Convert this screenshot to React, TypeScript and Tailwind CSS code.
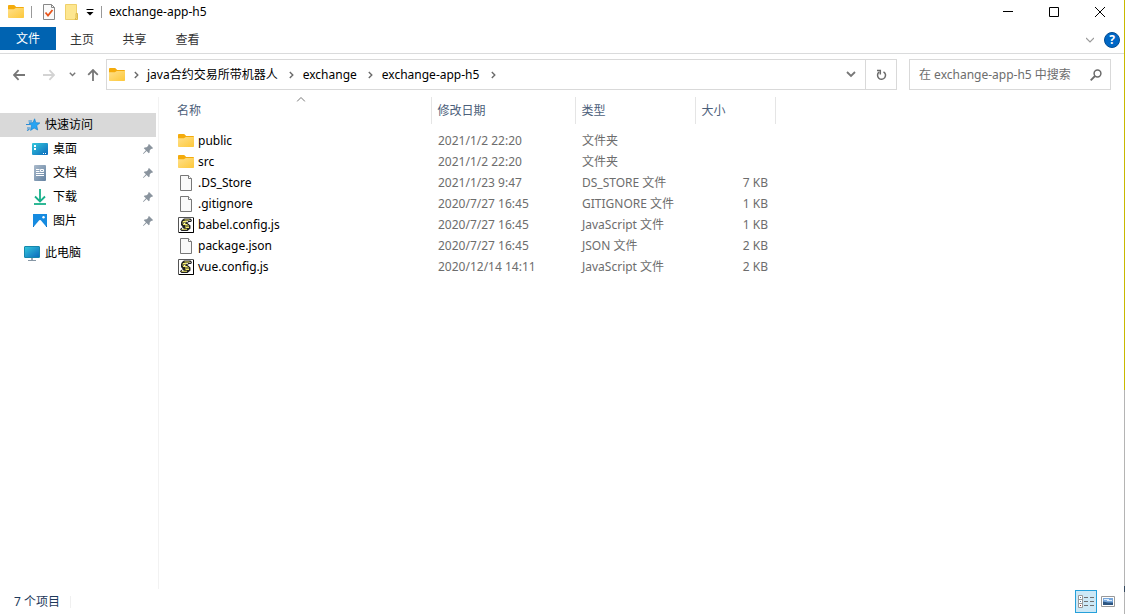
import React, { useState } from 'react';

interface FileEntry {
  name: string;
  modified: string;
  type: string;
  size: string;
  kind: 'folder' | 'file' | 'script';
}

const FILES: FileEntry[] = [
  { name: 'public', modified: '2021/1/2 22:20', type: '文件夹', size: '', kind: 'folder' },
  { name: 'src', modified: '2021/1/2 22:20', type: '文件夹', size: '', kind: 'folder' },
  { name: '.DS_Store', modified: '2021/1/23 9:47', type: 'DS_STORE 文件', size: '7 KB', kind: 'file' },
  { name: '.gitignore', modified: '2020/7/27 16:45', type: 'GITIGNORE 文件', size: '1 KB', kind: 'file' },
  { name: 'babel.config.js', modified: '2020/7/27 16:45', type: 'JavaScript 文件', size: '1 KB', kind: 'script' },
  { name: 'package.json', modified: '2020/7/27 16:45', type: 'JSON 文件', size: '2 KB', kind: 'file' },
  { name: 'vue.config.js', modified: '2020/12/14 14:11', type: 'JavaScript 文件', size: '2 KB', kind: 'script' },
];

const CRUMBS = ['java合约交易所带机器人', 'exchange', 'exchange-app-h5'];

function FolderIcon() {
  return (
    <svg width="16" height="16" viewBox="0 0 16 16" className="shrink-0">
      <defs>
        <linearGradient id="folder" x1="0" y1="0" x2="1" y2="1">
          <stop offset="0" stopColor="#ffe08a" />
          <stop offset="1" stopColor="#fdc83a" />
        </linearGradient>
      </defs>
      <path d="M0 1.9a.9.9 0 0 1 .9-.9h5.3l2 1.9h6.9a.9.9 0 0 1 .9.9V8H0z" fill="#f4ab0c" />
      <path d="M0 5.2h5.8l2-1.2H16v9.2a.8.8 0 0 1-.8.8H.8a.8.8 0 0 1-.8-.8z" fill="url(#folder)" />
    </svg>
  );
}

function PageIcon() {
  return (
    <svg width="16" height="16" viewBox="0 0 16 16" className="shrink-0">
      <path d="M2.5.5h8l3 3v12h-11z" fill="#f9f9f9" stroke="#777" />
      <path d="M10.5.5v3h3" fill="#fff" stroke="#777" />
    </svg>
  );
}

function ScriptIcon() {
  return (
    <svg width="16" height="16" viewBox="0 0 16 16" className="shrink-0">
      <path d="M.5.5h15v15H.5z" fill="#fff" stroke="#555" />
      <path d="M1 15.5h14.5V1" fill="none" stroke="#000" />
      <path d="M4 3 6 1.5h6.5L14 3l-.8 2H11l-1.5 1 3 2.5v3L9.5 14H3.5L2 12.5 3 11l2-.5L3 8V5z" fill="#222" />
      <path d="M6.5 3h5M4.8 4.5h4M4.3 6h3.6M5 7.5h4.5M7 9h4M7.5 10.5h3.5M3.5 12.3h5.5" stroke="#f7ee6a" strokeWidth="1.1" />
      <path d="M11.5 3.5h1M8.5 4.7h1.5M6 6.6h1M4 11.6h1.5" stroke="#fff" />
    </svg>
  );
}

function PinIcon() {
  return (
    <svg width="10" height="10" viewBox="0 0 10 10" className="shrink-0">
      <path d="M6 0 10 4 9 4.9 8.2 4.7 6.7 6.4 6.6 8.4 5.8 9.2 3.6 7 .7 9.7 0 9.9.2 9.2 2.9 6.3.8 4.2l.8-.8 2-.1 1.7-1.5L5.1.9z" fill="#8a949e" />
    </svg>
  );
}

function StarIcon() {
  return (
    <svg width="14" height="14" viewBox="0 0 14 14" className="shrink-0">
      <path d="m8.6.8 1.2 3.9 4.1.2-3.2 2.7 1 4.4-3.6-2-3.5 2.4.9-4.6L3 4.8l4-.1z" fill="#27a4f2" stroke="#1685d4" strokeWidth=".7" />
      <path d="M2.5 3h3.6M0 6.5h4M1 10h3.4M1 12.5l2.4-1.3" stroke="#2b8bd4" strokeWidth="1.1" />
    </svg>
  );
}

function DesktopIcon() {
  return (
    <svg width="16" height="16" viewBox="0 0 16 16" className="shrink-0">
      <defs>
        <linearGradient id="screen" x1="0" y1="0" x2="1" y2="1">
          <stop offset="0" stopColor="#35c9dc" />
          <stop offset="1" stopColor="#0b68bc" />
        </linearGradient>
      </defs>
      <rect y="2" width="16" height="12" rx="1" fill="url(#screen)" />
      <path d="M2 4h2v2H2zM2 7h2v2H2zM11 12h1v1h-1zM13 12h1v1h-1z" fill="#fff" />
    </svg>
  );
}

function DocumentIcon() {
  return (
    <svg width="16" height="16" viewBox="0 0 16 16" className="shrink-0">
      <defs>
        <linearGradient id="doc" x1="0" y1="0" x2="1" y2="1">
          <stop offset="0" stopColor="#aabacb" />
          <stop offset="1" stopColor="#6482a1" />
        </linearGradient>
      </defs>
      <rect x="2" y="0" width="12" height="16" rx="1" fill="url(#doc)" />
      <path d="M4 4.5h3.5M4 6.5h3.5M4 8.5h8M4 10.5h8" stroke="#fff" />
      <path d="M8.5 4.5h3v2h-3z" fill="#8aa0b8" stroke="#fff" />
    </svg>
  );
}

function DownloadIcon() {
  return (
    <svg width="16" height="16" viewBox="0 0 16 16" className="shrink-0" fill="none" stroke="#18b08b">
      <path d="M8 0v12.5M3 7.5l5 5 5-5" strokeWidth="1.8" />
      <path d="M2 15h12" strokeWidth="1.8" />
    </svg>
  );
}

function PictureIcon() {
  return (
    <svg width="16" height="16" viewBox="0 0 16 16" className="shrink-0">
      <path d="M1 1h14v13H1z" fill="#168be0" />
      <path d="M1.5 14 7.2 7.3q.8-.8 1.6 0L14.5 14z" fill="#fff" />
      <path d="M1 12v2h1zM15 12v2h-1z" fill="#0b60b4" />
      <circle cx="11.5" cy="4.2" r="1.2" fill="#fff" />
    </svg>
  );
}

function ComputerIcon() {
  return (
    <svg width="16" height="16" viewBox="0 0 16 16" className="shrink-0">
      <rect x=".5" y="1.5" width="15" height="11" rx=".5" fill="url(#screen)" stroke="#1687ac" />
      <path d="M7 13h2v2H7z" fill="#9aa7b2" />
      <path d="M4 15.5h8" stroke="#8797a5" />
    </svg>
  );
}

function Chevron() {
  return (
    <svg width="5" height="8" viewBox="0 0 5 8" className="shrink-0" fill="none" stroke="#6b6b6b" strokeWidth="1.4">
      <path d="m.8 1 3 3-3 3" />
    </svg>
  );
}

const QUICK_LINKS = [
  { label: '桌面', icon: <DesktopIcon /> },
  { label: '文档', icon: <DocumentIcon /> },
  { label: '下载', icon: <DownloadIcon /> },
  { label: '图片', icon: <PictureIcon /> },
];

function TitleBar() {
  return (
    <header className="flex h-[27px] items-start justify-between pr-px pl-2">
      <div className="flex h-6 items-center">
        <FolderIcon />
        <span className="ml-[7px] h-3 w-px bg-[#999]" />
        <button aria-label="属性" className="ml-[11px]">
          <svg width="14" height="16" viewBox="0 0 14 16">
            <path d="M.5.5h8l3 3v12H.5z" fill="#fafafa" stroke="#888" />
            <path d="M8.5.5v3h3" fill="none" stroke="#888" />
            <path d="m2.5 8.5 2.5 3 4.5-5.5" fill="none" stroke="#e8541a" strokeWidth="1.8" />
          </svg>
        </button>
        <button aria-label="新建文件夹" className="ml-2">
          <svg width="14" height="16" viewBox="0 0 14 16">
            <path d="M.5.5h11v15H.5z" fill="#fde68f" stroke="#efd06a" />
            <path d="M11 9.5h1.5v6H10l1-2z" fill="#f8dc78" stroke="#dcb94c" />
          </svg>
        </button>
        <button aria-label="自定义快速访问工具栏" className="ml-[7px]">
          <svg width="8" height="8" viewBox="0 0 8 8">
            <path d="M.5 1.5h7" stroke="#000" />
            <path d="M.5 4h7L4 7.5z" fill="#000" />
          </svg>
        </button>
        <span className="ml-[7px] h-3 w-px bg-[#999]" />
        <h1 className="ml-[7px] text-black">exchange-app-h5</h1>
      </div>
      <div className="flex h-6 items-center text-black">
        <button aria-label="最小化" className="flex w-[46px] justify-center">
          <svg width="10" height="10" viewBox="0 0 10 10"><path d="M0 4.5h10" stroke="#000" /></svg>
        </button>
        <button aria-label="最大化" className="flex w-[46px] justify-center">
          <svg width="10" height="10" viewBox="0 0 10 10"><path d="M.5.5h9v9h-9z" fill="none" stroke="#000" /></svg>
        </button>
        <button aria-label="关闭" className="flex w-[46px] justify-center">
          <svg width="10" height="10" viewBox="0 0 10 10"><path d="m0 0 10 10M10 0 0 10" stroke="#000" /></svg>
        </button>
      </div>
    </header>
  );
}

function RibbonTabs() {
  return (
    <nav className="flex h-[27px] items-start justify-between border-b border-[#dadbdc]">
      <div className="flex items-stretch text-[#333]">
        <button className="h-[23px] w-14 bg-[#0063b1] text-white">文件</button>
        <button className="h-[25px] w-[52px]">主页</button>
        <button className="h-[25px] w-[53px]">共享</button>
        <button className="h-[25px] w-[53px]">查看</button>
      </div>
      <div className="flex h-[26px] items-center gap-[10px] pr-1">
        <button aria-label="展开功能区">
          <svg width="8" height="6" viewBox="0 0 8 6" fill="none" stroke="#999" strokeWidth="1.2">
            <path d="m0 1 4 4 4-4" />
          </svg>
        </button>
        <button aria-label="帮助" className="flex size-4 items-center justify-center rounded-full border border-[#004c93] bg-[#0067c5] font-bold text-white">
          ?
        </button>
      </div>
    </nav>
  );
}

function AddressBar() {
  const [query, setQuery] = useState('');

  return (
    <div className="flex items-center pt-[5px] pr-[13px]">
      <div className="flex w-[106px] items-center pl-[13px]">
        <button aria-label="后退">
          <svg width="12" height="12" viewBox="0 0 12 12" fill="none" stroke="#777" strokeWidth="1.8">
            <path d="M12 6H1M5.6 1.2.9 6l4.7 4.8" />
          </svg>
        </button>
        <button aria-label="前进" className="ml-[18px]">
          <svg width="12" height="12" viewBox="0 0 12 12" fill="none" stroke="#d3d3d3" strokeWidth="1.8">
            <path d="M0 6h11M6.4 1.2 11.1 6l-4.7 4.8" />
          </svg>
        </button>
        <button aria-label="最近浏览的位置" className="ml-[14px]">
          <svg width="7" height="5" viewBox="0 0 7 5" fill="none" stroke="#777" strokeWidth="1.4">
            <path d="m.8.8 2.7 2.7L6.2.8" />
          </svg>
        </button>
        <button aria-label="上移" className="ml-[11px]">
          <svg width="12" height="12" viewBox="0 0 12 12" fill="none" stroke="#777" strokeWidth="1.8">
            <path d="M6 12V1M1.2 5.8 6 1l4.8 4.8" />
          </svg>
        </button>
      </div>

      <div className="flex h-[31px] flex-1 items-stretch border border-[#d9d9d9]">
        <div className="flex flex-1 items-center pl-[2px]">
          <FolderIcon />
          <ol className="flex items-center gap-[3px] text-black">
            {CRUMBS.map((crumb) => (
              <li key={crumb} className="flex items-center">
                <span className="flex w-[22px] justify-center">
                  <Chevron />
                </span>
                <a href="#">{crumb}</a>
              </li>
            ))}
          </ol>
          <span className="ml-[3px] flex w-[22px] justify-center">
            <Chevron />
          </span>
        </div>
        <button aria-label="以前的位置" className="flex w-[29px] items-center justify-center">
          <svg width="10" height="7" viewBox="0 0 10 7" fill="none" stroke="#777" strokeWidth="1.8">
            <path d="m1 1 4 4 4-4" />
          </svg>
        </button>
        <button aria-label="刷新" className="flex w-[31px] items-center justify-center border-l border-[#d9d9d9]">
          <svg width="11" height="12" viewBox="0 0 11 12" fill="none" stroke="#6b6b6b" strokeWidth="1.5">
            <path d="M7.5 2.8A4 4 0 1 1 3 3.2M1 1.5h3.3v4" />
          </svg>
        </button>
      </div>

      <label className="ml-3 flex h-[31px] w-[202px] items-center border border-[#d9d9d9] pr-2 pl-[9px]">
        <input
          type="text"
          aria-label="搜索"
          placeholder="在 exchange-app-h5 中搜索"
          value={query}
          onChange={(e) => setQuery(e.target.value)}
          className="min-w-0 flex-1 outline-none placeholder:text-[#6d6d6d]"
        />
        <svg width="12" height="12" viewBox="0 0 12 12" fill="none" stroke="#6b6b6b" strokeWidth="1.5">
          <circle cx="7.5" cy="4.5" r="3.4" />
          <path d="M5 7 .7 11.3" strokeWidth="1.8" />
        </svg>
      </label>
    </div>
  );
}

function Sidebar() {
  return (
    <aside className="w-[159px] shrink-0 border-r border-[#f2f2f2] pt-4 pr-[2px] text-black">
      <a href="#" className="flex h-6 items-center gap-[5px] bg-[#d9d9d9] pl-[26px]">
        <StarIcon />
        快速访问
      </a>
      {QUICK_LINKS.map((link) => (
        <a key={link.label} href="#" className="flex h-6 items-center gap-[5px] pr-[3px] pl-8">
          {link.icon}
          <span className="flex-1">{link.label}</span>
          <PinIcon />
        </a>
      ))}
      <a href="#" className="mt-2 flex h-6 items-center gap-[5px] pl-6">
        <ComputerIcon />
        此电脑
      </a>
    </aside>
  );
}

function FileTable() {
  return (
    <table className="w-[604px] table-fixed self-start text-left text-[#6d6d6d]">
      <colgroup>
        <col className="w-[260px]" />
        <col className="w-36" />
        <col className="w-30" />
        <col className="w-20" />
      </colgroup>
      <thead className="text-[#4c607a]">
        <tr className="h-[27px]">
          <th className="relative border-r border-[#e5e5e5] pl-[6px] font-normal">
            名称
            <svg width="9" height="5" viewBox="0 0 9 5" className="absolute top-0 left-1/2 -translate-x-1/2" fill="none" stroke="#777">
              <path d="m.5 4.5 4-4 4 4" />
            </svg>
          </th>
          <th className="border-r border-[#e5e5e5] pl-[6px] font-normal">修改日期</th>
          <th className="border-r border-[#e5e5e5] pl-[6px] font-normal">类型</th>
          <th className="border-r border-[#e5e5e5] pl-[6px] font-normal">大小</th>
        </tr>
      </thead>
      <tbody className="before:block before:h-[6px] before:content-['']">
        {FILES.map((file) => (
          <tr key={file.name} className="h-[21px]">
            <td className="pl-[7px] text-black">
              <span className="flex items-center gap-1">
                {file.kind === 'folder' && <FolderIcon />}
                {file.kind === 'file' && <PageIcon />}
                {file.kind === 'script' && <ScriptIcon />}
                {file.name}
              </span>
            </td>
            <td className="pl-[7px]">{file.modified}</td>
            <td className="pl-[7px]">{file.type}</td>
            <td className="pr-[7px] text-right">{file.size}</td>
          </tr>
        ))}
      </tbody>
    </table>
  );
}

function StatusBar() {
  return (
    <footer className="flex h-[25px] items-center justify-between pr-[9px] pl-[14px] text-[#1e395b]">
      <div className="flex items-center">
        <span>7 个项目</span>
        <span className="ml-[10px] h-3 w-px bg-[#f0f0f0]" />
      </div>
      <div className="flex items-center">
        <button aria-label="详细信息" className="flex h-[23px] w-[22px] items-center justify-center border border-[#26a0da] bg-[#cce8f6]">
          <svg width="16" height="13" viewBox="0 0 16 13">
            <path d="M.5.5h4v12h-4zM.5 4.5h4M.5 8.5h4" fill="#fff" stroke="#999" />
            <path d="M2 2h1v1H2zM2 6h1v1H2z" fill="#557a9b" />
            <path d="M2 10h1v1H2z" fill="#8b3a3a" />
            <path d="M6 2.5h4M12 2.5h4M6 6.5h4M12 6.5h4M6 10.5h4M12 10.5h4" stroke="#707070" />
          </svg>
        </button>
        <button aria-label="大图标" className="ml-1">
          <svg width="14" height="11" viewBox="0 0 14 11">
            <path d="M.5.5h13v10H.5z" fill="#fff" stroke="#999" />
            <path d="M2 2h10v7H2z" fill="#77a7dc" />
            <path d="M3 3.5h5M6 4.5h5" stroke="#dcecfa" />
            <path d="M2 5.5 7 6.5h5V9H2z" fill="#2c5580" />
          </svg>
        </button>
      </div>
    </footer>
  );
}

export default function App() {
  return (
    <div className="flex min-h-screen bg-white font-['Noto_Sans','Noto_Sans_CJK_SC',sans-serif] text-[12px] leading-4">
      <div className="flex min-w-0 flex-1 flex-col">
        <TitleBar />
        <RibbonTabs />
        <AddressBar />
        <main className="mt-[7px] flex flex-1">
          <Sidebar />
          <div className="flex-1 pl-3">
            <FileTable />
          </div>
        </main>
        <StatusBar />
      </div>
      {/* strip of the window behind */}
      <div className="flex w-px flex-col bg-[#b4b4b4]">
        <div className="h-[390px] bg-[#c8b900]" />
        <div className="mt-auto mb-[22px] h-[6px] bg-[#34495e]" />
      </div>
    </div>
  );
}
